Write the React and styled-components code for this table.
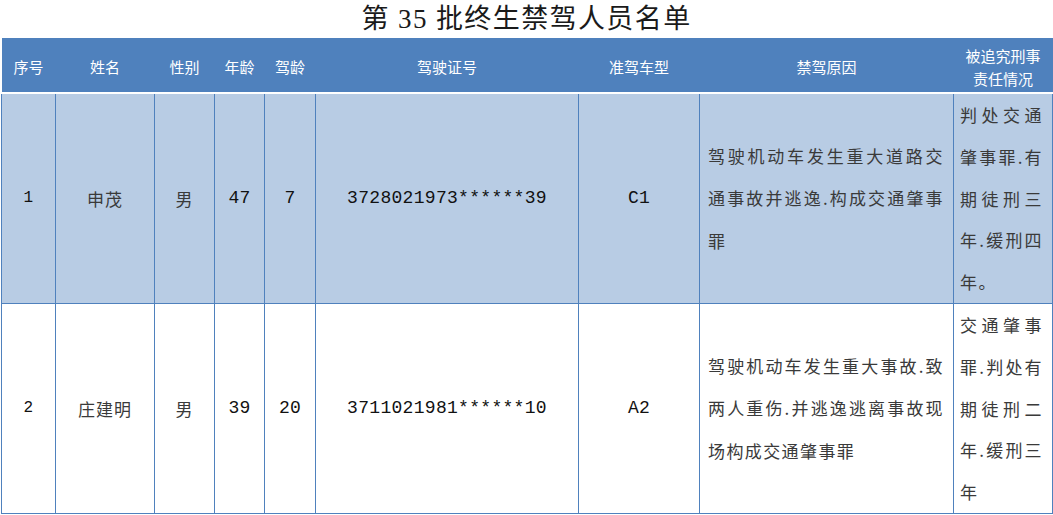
import React from 'react';
import styled, { createGlobalStyle } from 'styled-components';

const GlobalStyle = createGlobalStyle`
  html, body {
    margin: 0;
    padding: 0;
    background: #fff;
  }
  body {
    font-family: "Noto Sans CJK SC", "Liberation Sans", sans-serif;
    color: #222;
  }
`;

const Page = styled.div`
  width: 1053px;
  height: 515px;
  overflow: hidden;
`;

const Title = styled.h1`
  margin: 0;
  height: 38px;
  line-height: 38px;
  text-align: center;
  font-family: "Liberation Serif", "Noto Sans CJK SC", serif;
  font-size: 27px;
  font-weight: 400;
  color: #1a1a1a;
  letter-spacing: 1.4px;
`;

const Sheet = styled.table`
  margin-left: 1px;
  width: 1051px;
  table-layout: fixed;
  border-collapse: collapse;
`;

const HeadRow = styled.tr`
  height: 55px;
`;

const HeadCell = styled.th`
  padding: 3px 0 0;
  background: #4f81bd;
  color: #fff;
  font-size: 15px;
  font-weight: 400;
  line-height: 23px;
  text-align: center;
  vertical-align: middle;
  border: none;
  border-bottom: 2px solid #fff;
`;

const Row = styled.tr`
  background: ${(p) => (p.$shaded ? '#b8cce4' : '#fff')};
`;

const Cell = styled.td`
  padding: 0;
  border: 1px solid #4f81bd;
  vertical-align: middle;
  text-align: center;
  font-family: ${(p) =>
    p.$mono ? '"Liberation Mono", monospace' : '"Noto Sans CJK SC", sans-serif'};
  font-size: ${(p) => p.$size || 17}px;
  letter-spacing: ${(p) => (p.$mono ? '0.3px' : '1px')};
  color: ${(p) => (p.$mono ? '#111' : '#3a3a3a')};
`;

const TextCell = styled.td`
  padding: ${(p) => (p.$narrow ? '0 9px 0 6px' : '0 9px 0 8px')};
  border: 1px solid #4f81bd;
  vertical-align: middle;
  font-family: "Noto Sans CJK SC", sans-serif;
  font-size: 17px;
  letter-spacing: 1.4px;
  color: #3a3a3a;
  line-height: ${(p) => (p.$narrow ? '41.8px' : '42.5px')};
`;

const Line = styled.div`
  text-align: ${(p) => (p.$spread ? 'justify' : 'left')};
  text-align-last: ${(p) => (p.$spread ? 'justify' : 'left')};
  text-justify: inter-character;
`;

const columns = [
  { w: 54, label: '序号' },
  { w: 99, label: '姓名' },
  { w: 60, label: '性别' },
  { w: 50, label: '年龄' },
  { w: 51, label: '驾龄' },
  { w: 263, label: '驾驶证号' },
  { w: 121, label: '准驾车型' },
  { w: 254, label: '禁驾原因' },
  { w: 99, label: ['被追究刑事', '责任情况'] },
];

const people = [
  {
    no: '1',
    name: '申茂',
    sex: '男',
    age: '47',
    years: '7',
    licence: '3728021973******39',
    klass: 'C1',
    reason: ['驾驶机动车发生重大道路交', '通事故并逃逸.构成交通肇事', '罪'],
    liability: ['判处交通', '肇事罪.有', '期徒刑三', '年.缓刑四', '年。'],
  },
  {
    no: '2',
    name: '庄建明',
    sex: '男',
    age: '39',
    years: '20',
    licence: '3711021981******10',
    klass: 'A2',
    reason: ['驾驶机动车发生重大事故.致', '两人重伤.并逃逸逃离事故现', '场构成交通肇事罪'],
    liability: ['交通肇事', '罪.判处有', '期徒刑二', '年.缓刑三', '年'],
  },
];

const Lines = ({ items }) =>
  items.map((text, i) => (
    <Line key={i} $spread={i < items.length - 1}>
      {text}
    </Line>
  ));

const App = () => (
  <Page lang="zh-CN">
    <GlobalStyle />
    <Title>第 35 批终生禁驾人员名单</Title>
    <Sheet>
      <colgroup>
        {columns.map((c, i) => (
          <col key={i} style={{ width: c.w }} />
        ))}
      </colgroup>
      <thead>
        <HeadRow>
          {columns.map((c, i) => (
            <HeadCell key={i}>
              {Array.isArray(c.label)
                ? c.label.map((t) => <div key={t}>{t}</div>)
                : c.label}
            </HeadCell>
          ))}
        </HeadRow>
      </thead>
      <tbody>
        {people.map((p, i) => (
          <Row key={p.no} $shaded={i === 0}>
            <Cell $mono $size={16}>{p.no}</Cell>
            <Cell>{p.name}</Cell>
            <Cell>{p.sex}</Cell>
            <Cell $mono $size={18}>{p.age}</Cell>
            <Cell $mono $size={18}>{p.years}</Cell>
            <Cell $mono $size={18}>{p.licence}</Cell>
            <Cell $mono $size={18}>{p.klass}</Cell>
            <TextCell>
              <Lines items={p.reason} />
            </TextCell>
            <TextCell $narrow>
              <Lines items={p.liability} />
            </TextCell>
          </Row>
        ))}
      </tbody>
    </Sheet>
  </Page>
);

export default App;
